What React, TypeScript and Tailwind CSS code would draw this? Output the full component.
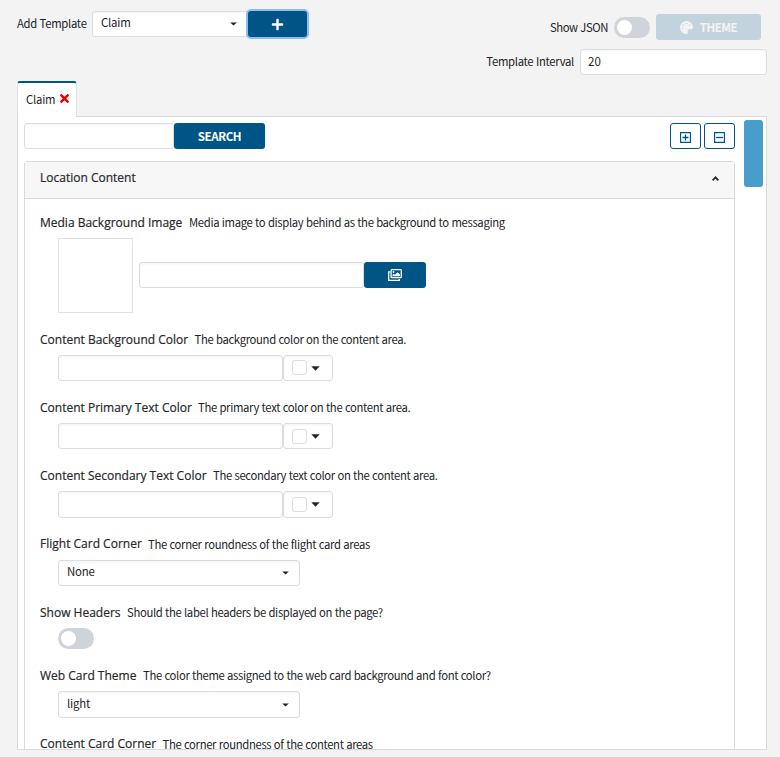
import type { ReactNode } from "react";
import { FaPlus, FaTimes, FaPalette } from "react-icons/fa";

const inset = "border border-[#d9dee0] bg-white shadow-[inset_0_1px_3px_rgba(0,0,0,0.05)]";

function Toggle() {
  return (
    <div className="flex h-[21px] w-9 items-center rounded-full bg-[#ced4da] pl-[3px]">
      <div className="size-[15px] rounded-full bg-white" />
    </div>
  );
}

function Caret({ big = false }: { big?: boolean }) {
  return big ? (
    <svg width="9" height="5" viewBox="0 0 9 5"><path d="M.3.3h8.4L4.5 4.7z" fill="#212529" /></svg>
  ) : (
    <svg width="7" height="4" viewBox="0 0 7 4"><path d="M.2.6h6.6L3.5 3.6z" fill="#212529" /></svg>
  );
}

function Select({ value, className }: { value: string; className: string }) {
  return (
    <div className={`flex items-center justify-between rounded-[3px] pr-[10px] pl-2 ${inset} ${className}`}>
      <span className="pb-[4px] text-[11.4px] leading-5 tracking-[-0.2px]">{value}</span>
      <Caret />
    </div>
  );
}

function ColorPicker({ className = "h-[26px]", swatchClass = "" }: { className?: string; swatchClass?: string }) {
  return (
    <div className={`flex ${className}`}>
      <div className={`w-[225px] rounded-[3px] ${inset}`} />
      <div className={`flex w-[50px] items-center rounded-[3px] pl-2 ${inset}`}>
        <div className={`mr-1 size-[15px] rounded-[3px] border border-[#d9dee0] bg-white ${swatchClass}`} />
        <Caret big />
      </div>
    </div>
  );
}

type FieldProps = { label: string; labelClass: string; text: string; textClass?: string; className: string; children?: ReactNode };

function Field({ label, labelClass, text, textClass = "leading-[18px]", className, children }: FieldProps) {
  return (
    <div className={`shrink-0 ${className}`}>
      <div className="flex h-5 whitespace-nowrap leading-5">
        <div className={`shrink-0 font-['Open_Sans',sans-serif] text-[12px] tracking-normal [word-spacing:0] [-webkit-text-stroke:0.2px_#333] ${labelClass}`}>{label}</div>
        <div className={textClass}>{text}</div>
      </div>
      <div className="mt-[5px] pl-[18px]">{children}</div>
    </div>
  );
}

export default function App() {
  return (
    <div className="flex h-[757px] w-[780px] flex-col overflow-hidden bg-[#f3f3f3] font-['Noto_Sans_CJK_SC',sans-serif] text-[11.3px] tracking-[-0.34px] text-[#212529] [word-spacing:0.4px]">
      <div className="flex h-[81px] shrink-0 justify-between pr-[13px] pl-[17px]">
        <div className="flex pt-[11px]">
          <span className="w-[75px] leading-[24px] tracking-[-0.3px] whitespace-nowrap">Add Template</span>
          <Select value="Claim" className="h-[26px] w-[156px]" />
          <button className="flex h-[26px] w-[59px] items-center justify-center rounded-[3px] bg-[#005587] text-white shadow-[0_0_0_2px_#8bbdf5]">
            <FaPlus size={13} />
          </button>
        </div>
        <div className="flex flex-col items-end pt-[14px]">
          <div className="mr-[6px] flex h-[26px] items-center">
            <span className="mr-[6px] leading-[26px] tracking-[-0.4px]">Show JSON</span>
            <Toggle />
            <button className="ml-[6px] flex h-[26px] w-[105px] items-center justify-center gap-[7px] rounded-[3px] bg-[#c3d3dd] text-[11.5px] font-bold tracking-[-0.5px] text-[#f3f3f3]">
              <FaPalette size={13} />
              <span className="leading-5">THEME</span>
            </button>
          </div>
          <div className="mt-[9px] flex h-[26px]">
            <span className="mr-[6px] leading-[24px] tracking-[-0.3px]">Template Interval</span>
            <div className={`w-[187px] rounded-[3px] pl-[7px] text-[11.5px] leading-[22px] tracking-normal ${inset}`}>20</div>
          </div>
        </div>
      </div>
      <div className="z-10 ml-[17px] flex h-9 w-[60px] shrink-0 rounded-t-[3px] border-x border-t-2 border-x-[#dee2e6] border-t-[#005587] bg-white pl-[8px]">
        <span className="w-[32px] leading-[32px] tracking-[-0.2px]">Claim</span>
        <FaTimes className="mt-[9px]" size={13} color="#dc0000" />
      </div>
      <div className="-mt-px ml-[17px] flex h-[634px] w-[750px] shrink-0 overflow-hidden border border-[#d9dcdf] bg-white pl-[6px]">
        <div className="flex w-[711px] shrink-0 flex-col pt-[6px]">
          <div className="flex h-[26px] shrink-0">
            <div className={`w-[150px] rounded-[3px] ${inset}`} />
            <button className="w-[91px] rounded-[3px] bg-[#005587] text-[11.5px] leading-[26px] font-bold tracking-[-0.4px] text-white">SEARCH</button>
            <div className="ml-auto flex gap-[3px]">
              {[true, false].map((plus) => (
                <button key={String(plus)} className="flex w-[31px] items-center justify-center rounded-[3px] border border-[#005587] bg-white pt-[3px]">
                  <svg width="11" height="11" viewBox="0 0 11 11" fill="none" stroke="#005587">
                    <path d="M.5.5h10v10H.5z" strokeWidth="1.3" />
                    <path d={plus ? "M2.5 5.5h6M5.5 2.5v6" : "M2 5.5h7"} strokeWidth="1.3" />
                  </svg>
                </button>
              ))}
            </div>
          </div>
          <div className="mt-3 flex h-[600px] shrink-0 flex-col rounded-t-[3px] border border-[#d9dcdf]">
            <div className="flex h-[37px] shrink-0 items-center justify-between border-b border-[#d9dcdf] bg-[#f7f7f7] pr-[15px] pl-[15px]">
              <span className="pb-[4px] font-['Open_Sans',sans-serif] text-[12px] leading-5 tracking-normal [word-spacing:0] [-webkit-text-stroke:0.2px_#333]">Location Content</span>
              <svg className="mb-[3px]" width="7" height="5" viewBox="0 0 7 5" fill="none" stroke="#212529" strokeWidth="1.7"><path d="M.6 4.4 3.5 1.3l2.9 3.1" /></svg>
            </div>
            <div className="flex flex-col pt-[14px] pl-[15px]">
              <Field className="h-[117px]" label="Media Background Image" labelClass="w-[149px]" text="Media image to display behind as the background to messaging">
                <div className="flex h-[75px] items-center">
                  <div className="mr-[6px] size-[75px] border border-[#dee2e6]" />
                  <div className={`mb-px h-[26px] w-[225px] rounded-[3px] ${inset}`} />
                  <button className="mb-px flex h-[26px] w-[62px] items-center justify-center rounded-[3px] bg-[#005587]">
                    <svg width="14" height="12" viewBox="0 0 14 12" fill="none" stroke="white">
                      <rect x="3.1" y=".7" width="10.2" height="8" rx=".8" strokeWidth="1.3" />
                      <path d="M2 2.8H.7v8.5h10.6V10" strokeWidth="1.3" />
                      <circle cx="5.5" cy="3" r=".9" fill="white" stroke="none" />
                      <path d="M4.5 7.3V6l1.3-1.2 1.1 1L9.5 3.3 12 5.6v1.7z" fill="white" stroke="none" />
                    </svg>
                  </button>
                </div>
              </Field>
              <Field className="h-[68px]" label="Content Background Color" labelClass="w-[154.5px]" text="The background color on the content area."><ColorPicker swatchClass="mb-[2px]" /></Field>
              <Field className="h-[68px]" label="Content Primary Text Color" labelClass="w-[158px]" text="The primary text color on the content area."><ColorPicker /></Field>
              <Field className="h-[68px]" label="Content Secondary Text Color" labelClass="w-[173px]" text="The secondary text color on the content area."><ColorPicker className="h-[27px]" /></Field>
              <Field className="h-[69px]" label="Flight Card Corner" labelClass="w-[108px]" text="The corner roundness of the flight card areas" textClass="leading-5"><Select value="None" className="mt-[6px] h-[26px] w-[242px]" /></Field>
              <Field className="h-[63px]" label="Show Headers" labelClass="w-[87px]" text="Should the label headers be displayed on the page?"><Toggle /></Field>
              <Field className="h-[68px]" label="Web Card Theme" labelClass="w-[103px]" text="The color theme assigned to the web card background and font color?"><Select value="light" className="h-[27px] w-[242px]" /></Field>
              <Field className="h-[40px]" label="Content Card Corner" labelClass="w-[122.5px]" text="The corner roundness of the content areas" textClass="leading-5" />
            </div>
          </div>
        </div>
        <div className="mt-[3px] ml-[9px] h-[67px] w-[19px] shrink-0 rounded-[3px] bg-[#489dca]" />
      </div>
    </div>
  );
}
